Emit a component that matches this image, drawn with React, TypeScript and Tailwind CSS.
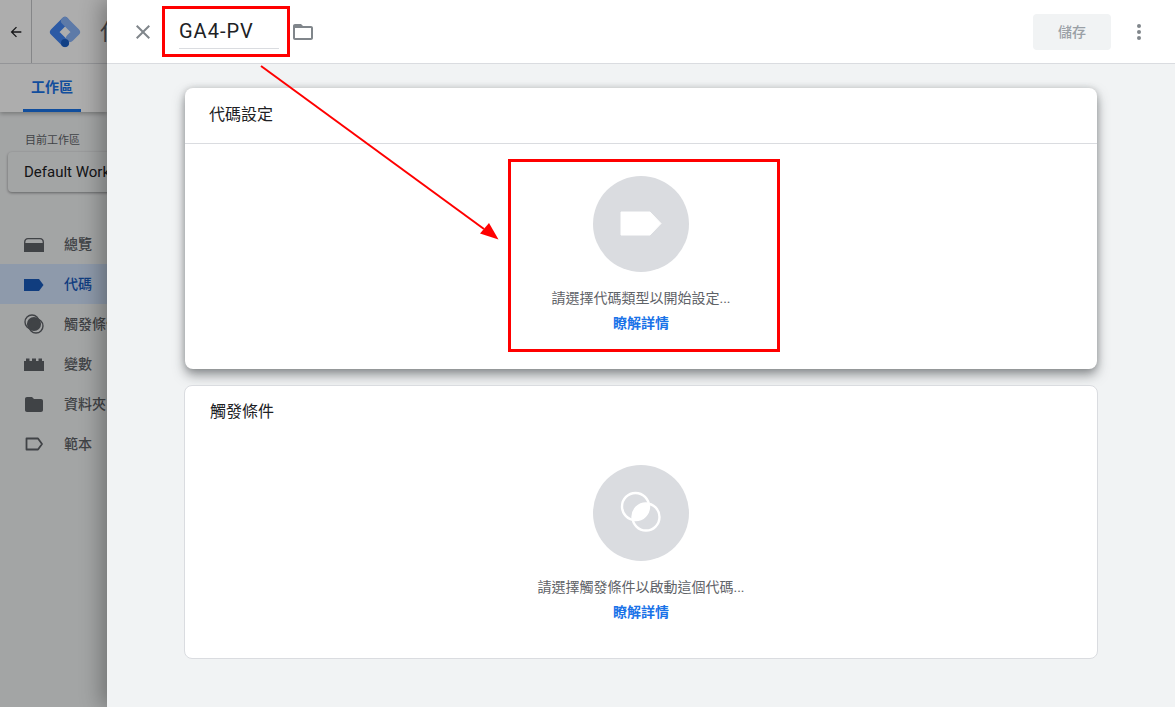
const navItems = [
  { label: "總覽", icon: "overview" },
  { label: "代碼", icon: "tag", active: true },
  { label: "觸發條件", icon: "trigger" },
  { label: "變數", icon: "variable" },
  { label: "資料夾", icon: "folder" },
  { label: "範本", icon: "template" },
];

const NavIcon = ({ name, color }: { name: string; color: string }) => {
  if (name === "overview") {
    return (
      <svg className="shrink-0" width="20" height="20" viewBox="0 0 20 20">
        <path d="M0 8.500 C0 5.500 1.500 4 4 4 H16 C18.500 4 20 5.500 20 8.500 V18 H0 Z" fill={color} />
        <path d="M1.300 9 C1.300 6.300 2.500 5.300 4 5.300 H16 C17.500 5.300 18.700 6.300 18.700 9 Z" fill="#f1f3f4" />
      </svg>
    );
  }
  if (name === "tag") {
    return (
      <svg className="shrink-0" width="20" height="20" viewBox="0 0 20 20">
        <path d="M0 5 H15 L19.500 11 L15 17 H0 Z" fill={color} />
      </svg>
    );
  }
  if (name === "trigger") {
    return (
      <svg className="shrink-0" width="20" height="20" viewBox="0 0 20 20">
        <path d="M15 5 A7 7 0 0 1 5 15 A7 7 0 0 1 15 5 Z" fill={color} />
        <circle cx="8" cy="8" r="7" fill="none" stroke={color} strokeWidth="1.400" />
        <circle cx="12" cy="12" r="7" fill="none" stroke={color} strokeWidth="1.400" />
      </svg>
    );
  }
  if (name === "variable") {
    return (
      <svg className="shrink-0" width="20" height="20" viewBox="0 0 20 20">
        <path d="M0 17 V7 H2 V4.500 H5.500 V7 H8 V4.500 H12 V7 H14.500 V4.500 H18 V7 H20 V17 Z" fill={color} />
      </svg>
    );
  }
  if (name === "folder") {
    return (
      <svg className="shrink-0" width="20" height="20" viewBox="0 0 20 20">
        <path d="M3 3 H8 L10 5 H17 C18.200 5 19 5.800 19 7 V16 C19 17.200 18.200 18 17 18 H3 C1.800 18 1 17.200 1 16 V5 C1 3.800 1.800 3 3 3 Z" fill={color} />
      </svg>
    );
  }
  return (
    <svg className="shrink-0" width="20" height="20" viewBox="0 0 20 20">
      <path d="M2.500 4.500 H14 L18 10 L14 15.500 H2.500 Z" fill="none" stroke={color} strokeWidth="1.800" strokeLinejoin="round" />
    </svg>
  );
};

const Sidebar = () => (
  <div className="w-[107px] shrink-0 overflow-hidden bg-[#f1f3f4]">
    {/* top bar */}
    <div className="w-[107px] overflow-hidden bg-white shadow-[0_2px_4px_rgba(0,0,0,0.25)] relative">
      <div className="h-16 flex items-center border-b border-[#dadce0]">
        <div className="w-8 shrink-0 h-full flex items-center border-r border-[#c4c6c9] pl-[8px]">
          <svg width="16" height="16" viewBox="0 0 24 24" fill="#202124">
            <path d="M20 11H7.830l5.590-5.590L12 4l-8 8 8 8 1.410-1.410L7.830 13H20v-2z" />
          </svg>
        </div>
        <svg className="ml-[17px] shrink-0" width="32" height="32" viewBox="0 0 32 32" fill="none">
          <path d="M16 5 L5 16 L16 27" stroke="#4285f4" strokeWidth="8" strokeLinecap="round" strokeLinejoin="round" />
          <path d="M16 5 L27 16 L21 22" stroke="#8ab4f8" strokeWidth="8" strokeLinecap="round" strokeLinejoin="round" />
          <circle cx="16" cy="27" r="4" fill="#1a5fc4" />
        </svg>
        <span className="ml-[19px] whitespace-nowrap text-[22px] text-[#5f6368]">代</span>
      </div>
      <div className="h-12 pl-[23px]">
        <div className="w-[58px] h-12 flex items-center justify-center border-b-[3px] border-[#1a73e8] pt-[1px]">
          <span className="text-sm font-bold text-[#1a73e8]">工作區</span>
        </div>
      </div>
    </div>
    <div className="pt-[21px] pl-[8px]">
      <div className="pl-[17px] text-[11px] leading-4 text-[#5f6368] whitespace-nowrap">目前工作區</div>
      <div className="mt-[3px] h-10 w-[240px] flex items-center pl-[16px] bg-[#f1f3f4] rounded shadow-[0_1px_3px_rgba(0,0,0,0.4)] text-[15px] text-[#202124] whitespace-nowrap">
        Default Work
      </div>
    </div>
    <div className="mt-[32px] w-[240px]">
      {navItems.map((item) => (
        <div
          key={item.label}
          className={`h-10 flex items-center pl-[24px] gap-[20px] whitespace-nowrap ${item.active ? "bg-[#d2e3fc]" : ""}`}
        >
          <NavIcon name={item.icon} color={item.active ? "#185abc" : "#5f6368"} />
          <span className={`text-sm font-medium ${item.active ? "text-[#185abc]" : "text-[#5f6368]"}`}>
            {item.label}
          </span>
        </div>
      ))}
    </div>
  </div>
);

const TopBar = () => (
  <div className="h-16 shrink-0 flex items-center bg-white border-b border-[#dadce0]">
    <svg className="ml-[24px]" width="24" height="24" viewBox="0 0 24 24" fill="#80868b">
      <path d="M19 6.410L17.590 5 12 10.590 6.410 5 5 6.410 10.590 12 5 17.590 6.410 19 12 13.410 17.590 19 19 17.590 13.410 12z" />
    </svg>
    <div className="ml-[24px] w-[100px] h-[34px] mt-[1px] border-b border-[#dadce0] text-xl leading-[32px] tracking-[1px] text-[#202124]">
      GA4-PV
    </div>
    <svg className="ml-[12px]" width="24" height="24" viewBox="0 0 24 24" fill="#80868b">
      <path d="M20 6h-8l-2-2H4c-1.100 0-1.990.900-1.990 2L2 18c0 1.100.900 2 2 2h16c1.100 0 2-.900 2-2V8c0-1.100-.900-2-2-2zm0 12H4V8h16v10z" />
    </svg>
    <button className="ml-auto w-[78px] h-9 rounded bg-[#f1f3f4] text-sm font-medium text-[#9aa0a6]">儲存</button>
    <svg className="ml-[16px] mr-[24px]" width="24" height="24" viewBox="0 0 24 24" fill="#80868b">
      <circle cx="12" cy="6" r="2" />
      <circle cx="12" cy="12" r="2" />
      <circle cx="12" cy="18" r="2" />
    </svg>
  </div>
);

const TagGlyph = () => (
  <svg width="42" height="26" viewBox="0 0 42 26">
    <path d="M1 1 H30 L41 12.500 L30 24 H1 Z" fill="#ffffff" strokeLinejoin="round" stroke="#ffffff" strokeWidth="1" />
  </svg>
);

const TriggerGlyph = () => (
  <svg width="44" height="44" viewBox="0 0 44 44">
    <path d="M29.720 12.780 A13.500 13.500 0 0 1 13.780 28.720 A13.500 13.500 0 0 1 29.720 12.780 Z" fill="#ffffff" />
    <circle cx="16.500" cy="15.500" r="13.500" fill="none" stroke="#ffffff" strokeWidth="2.400" />
    <circle cx="27" cy="26" r="13.500" fill="none" stroke="#ffffff" strokeWidth="2.400" />
  </svg>
);

const EmptyState = ({ glyph, text }: { glyph: React.ReactNode; text: string }) => (
  <div className="flex flex-col items-center">
    <div className="w-24 h-24 rounded-full bg-[#dadce0] flex items-center justify-center">{glyph}</div>
    <div className="mt-4 text-sm leading-5 text-[#5f6368]">{text}</div>
    <a className="mt-[5px] text-sm leading-5 font-bold text-[#1a73e8]">瞭解詳情</a>
  </div>
);

const App = () => (
  <div
    className="relative w-[1175px] h-[707px] overflow-hidden flex bg-white"
    style={{ fontFamily: 'Roboto, "Noto Sans CJK TC", sans-serif' }}
  >
    <Sidebar />
    {/* scrim over the page behind the drawer */}
    <div className="absolute inset-0 bg-black/32" />

    <div className="relative flex-1 flex flex-col bg-[#f1f3f4] shadow-[-6px_0_20px_rgba(0,0,0,0.3)]">
      <TopBar />
      <div className="flex-1 pt-6 px-[78px] flex flex-col gap-4">
        <section className="h-[281px] rounded-lg bg-white shadow-[0_6px_12px_rgba(60,64,67,0.55),0_0_6px_rgba(60,64,67,0.2)]">
          <div className="h-14 flex items-center pl-6 pb-[2px] border-b border-[#dadce0] text-base text-[#202124]">代碼設定</div>
          <div className="pt-[32px]">
            <EmptyState glyph={<TagGlyph />} text="請選擇代碼類型以開始設定..." />
          </div>
        </section>
        <section className="h-[274px] -mx-[1px] rounded-lg bg-white border border-[#dadce0]">
          <div className="h-[52px] flex items-center pl-[25px] text-base text-[#202124]">觸發條件</div>
          <div className="pt-[27px]">
            <EmptyState glyph={<TriggerGlyph />} text="請選擇觸發條件以啟動這個代碼..." />
          </div>
        </section>
      </div>
    </div>

    {/* red annotations */}
    <div className="absolute left-[162px] top-[6px] w-[128px] h-[51px] border-[3px] border-[#ff0000]" />
    <div className="absolute left-[508px] top-[159px] w-[272px] h-[193px] border-[3px] border-[#ff0000]" />
    <svg className="absolute left-0 top-0 pointer-events-none" width="1175" height="707">
      <line x1="261" y1="66" x2="484" y2="229" stroke="#ff0000" strokeWidth="2" />
      <polygon points="498.500,239.500 480,233.500 489,223" fill="#ff0000" />
    </svg>
  </div>
);

export default App;
